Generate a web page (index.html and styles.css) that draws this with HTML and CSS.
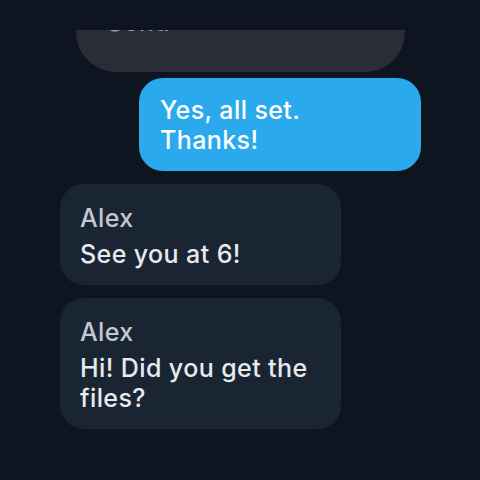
FILE: index.html
```html
<!DOCTYPE html>
<html>
<head>
<meta charset="utf-8">
<link rel="stylesheet" href="styles.css">
</head>
<body>
<div class="screen">
  <div class="top-spacer"></div>
  <div class="thread">
    <div class="composer"><span class="composer-text">Send</span></div>
    <div class="bubble mine">Yes, all set. Thanks!</div>
    <div class="bubble theirs">
      <div class="name">Alex</div>
      <div class="text">See you at 6!</div>
    </div>
    <div class="bubble theirs">
      <div class="name">Alex</div>
      <div class="text">Hi! Did you get the files?</div>
    </div>
  </div>
</div>
</body>
</html>
```

FILE: styles.css
```css
html, body {
  margin: 0;
  padding: 0;
  background: #0f1520;
}
body {
  font-family: Inter, Roboto, "Noto Sans", sans-serif;
}
.screen {
  width: 480px;
  height: 480px;
  display: flex;
  flex-direction: column;
  overflow: hidden;
}
.top-spacer {
  height: 30px;
  flex: none;
}
.thread {
  flex: 1;
  overflow: hidden;
  display: flex;
  flex-direction: column;
  padding: 0 59px 0 60px;
}
.composer {
  flex: none;
  height: 90px;
  box-sizing: border-box;
  margin: -48px 16px 6px 16px;
  padding: 25px 31px 35px;
  background: #282d38;
  border-radius: 40px;
  color: #9ba0a8;
  font-size: 25px;
  font-weight: 500;
  line-height: 30px;
  letter-spacing: 0.4px;
}
.bubble {
  flex: none;
  box-sizing: border-box;
  width: 281px;
  border-radius: 24px;
  font-size: 25px;
  font-weight: 500;
  line-height: 30px;
  letter-spacing: 0.4px;
}
.mine {
  align-self: flex-end;
  width: 282px;
  background: #2aaaec;
  color: #ffffff;
  padding: 17px 21px 16px;
  margin-bottom: 13px;
}
.theirs {
  align-self: flex-start;
  background: #1a2533;
  padding: 19px 20px 16px;
  margin-bottom: 13px;
}
.name {
  color: #c3c8cf;
  margin-bottom: 6px;
}
.text {
  color: #e8eaed;
}
```
